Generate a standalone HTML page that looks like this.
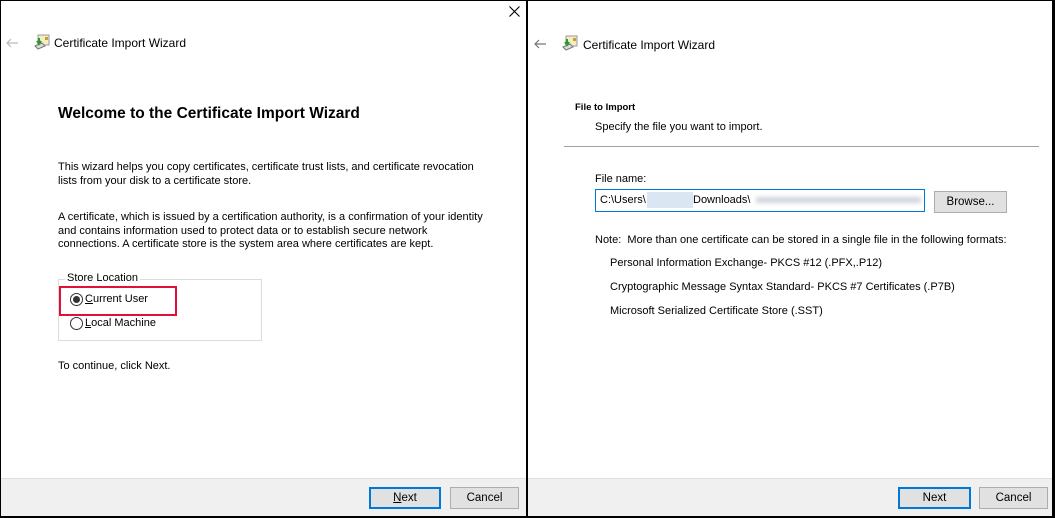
<!DOCTYPE html><html><head><style>
body{margin:0;width:1055px;height:518px;background:#000;position:relative;overflow:hidden;font-family:"Liberation Sans",sans-serif;font-size:11px;color:#000}
.w{position:absolute;background:#fff;top:1px;height:515px}
.a{position:absolute;white-space:nowrap}
.bar{position:absolute;left:0;right:0;bottom:0;height:37px;background:#f0f0f0;border-top:1px solid #dfdfdf}
.btn{position:absolute;height:20px;border:1px solid #adadad;background:#e1e1e1;text-align:center;line-height:20px;font-size:11.5px;box-sizing:content-box}
.def{border:2px solid #0078d7;height:18px;line-height:18px}
.ic{position:absolute;width:16px;height:16px}
</style></head><body>
<div class="w" style="left:1px;width:525px">
 <svg class="a" style="left:508px;top:5px" width="11" height="11" viewBox="0 0 11 11"><path d="M0.5 0.5L10.5 10.5M10.5 0.5L0.5 10.5" stroke="#000" stroke-width="1.1"/></svg>
 <svg class="a" style="left:5px;top:37px" width="12" height="10" viewBox="0 0 12 10"><path d="M1 5H12M5 1L1 5L5 9" stroke="#bbb" stroke-width="1.2" fill="none"/></svg>
 <svg class="ic" style="left:33px;top:33px" viewBox="0 0 16 16"><rect x="4" y="1" width="11" height="10" fill="#f4eec6" stroke="#999"/><rect x="11" y="3" width="3" height="3" fill="#c8a030"/><path d="M1 12l7-3 3 3-7 3z" fill="#ddd" stroke="#777"/><path d="M5 4v5M3 7l2 3 2-3" stroke="#2a9a2a" stroke-width="2" fill="none"/></svg>
 <div class="a" style="left:53px;top:35px;font-size:12px">Certificate Import Wizard</div>
 <div class="a" style="left:57px;top:104px;font-size:15.5px;font-weight:bold">Welcome to the Certificate Import Wizard</div>
 <div class="a" style="left:57px;top:159px;line-height:14px">This wizard helps you copy certificates, certificate trust lists, and certificate revocation<br>lists from your disk to a certificate store.</div>
 <div class="a" style="left:57px;top:210px;line-height:13.5px">A certificate, which is issued by a certification authority, is a confirmation of your identity<br>and contains information used to protect data or to establish secure network<br>connections. A certificate store is the system area where certificates are kept.</div>
 <div class="a" style="left:57px;top:278px;width:202px;height:60px;border:1px solid #dcdcdc"></div>
 <div class="a" style="left:64px;top:271px;background:#fff;padding:0 2px">Store Location</div>
 <div class="a" style="left:58px;top:285px;width:114px;height:26px;border:2px solid #e0103a"></div>
 <div class="a" style="left:69px;top:292px;width:11px;height:11px;border:1px solid #333;border-radius:50%"></div>
 <div class="a" style="left:72px;top:295px;width:7px;height:7px;background:#333;border-radius:50%"></div>
 <div class="a" style="left:84px;top:292px"><u>C</u>urrent User</div>
 <div class="a" style="left:69px;top:316px;width:11px;height:11px;border:1px solid #333;border-radius:50%"></div>
 <div class="a" style="left:84px;top:316px"><u>L</u>ocal Machine</div>
 <div class="a" style="left:57px;top:359px">To continue, click Next.</div>
 <div class="bar"><div class="btn def" style="left:368px;top:8px;width:68px"><u>N</u>ext</div><div class="btn" style="left:449px;top:8px;width:67px">Cancel</div></div>
</div>
<div class="w" style="left:528px;width:524px">
 <svg class="a" style="left:6px;top:38px" width="12" height="10" viewBox="0 0 12 10"><path d="M1 5H12M5 1L1 5L5 9" stroke="#777" stroke-width="1.2" fill="none"/></svg>
 <svg class="ic" style="left:34px;top:34px" viewBox="0 0 16 16"><rect x="4" y="1" width="11" height="10" fill="#f4eec6" stroke="#999"/><rect x="11" y="3" width="3" height="3" fill="#c8a030"/><path d="M1 12l7-3 3 3-7 3z" fill="#ddd" stroke="#777"/><path d="M5 4v5M3 7l2 3 2-3" stroke="#2a9a2a" stroke-width="2" fill="none"/></svg>
 <div class="a" style="left:55px;top:37px;font-size:12px">Certificate Import Wizard</div>
 <div class="a" style="left:47px;top:101px;font-size:9.5px;font-weight:bold">File to Import</div>
 <div class="a" style="left:67px;top:120px">Specify the file you want to import.</div>
 <div class="a" style="left:36px;top:145px;width:475px;height:1px;background:#a0a0a0"></div>
 <div class="a" style="left:67px;top:172px">File name:</div>
 <div class="a" style="left:67px;top:188px;width:328px;height:21px;border:1px solid #0078d7;overflow:hidden">
  <span class="a" style="left:4px;top:4px">C:\Users\</span><span class="a" style="left:51px;top:2px;width:46px;height:16px;background:#dbe6f3"></span><span class="a" style="left:97px;top:4px">Downloads\</span><span class="a" style="left:160px;top:7px;width:165px;height:6px;background:#d0d4dc;filter:blur(2px)"></span></div>
 <div class="btn" style="left:406px;top:190px;width:71px">Browse...</div>
 <div class="a" style="left:67px;top:233px">Note:&nbsp; More than one certificate can be stored in a single file in the following formats:</div>
 <div class="a" style="left:82px;top:256px">Personal Information Exchange- PKCS #12 (.PFX,.P12)</div>
 <div class="a" style="left:82px;top:280px">Cryptographic Message Syntax Standard- PKCS #7 Certificates (.P7B)</div>
 <div class="a" style="left:82px;top:304px">Microsoft Serialized Certificate Store (.SST)</div>
 <div class="bar"><div class="btn def" style="left:370px;top:8px;width:69px">Next</div><div class="btn" style="left:451px;top:8px;width:67px">Cancel</div></div>
</div>
</body></html>
